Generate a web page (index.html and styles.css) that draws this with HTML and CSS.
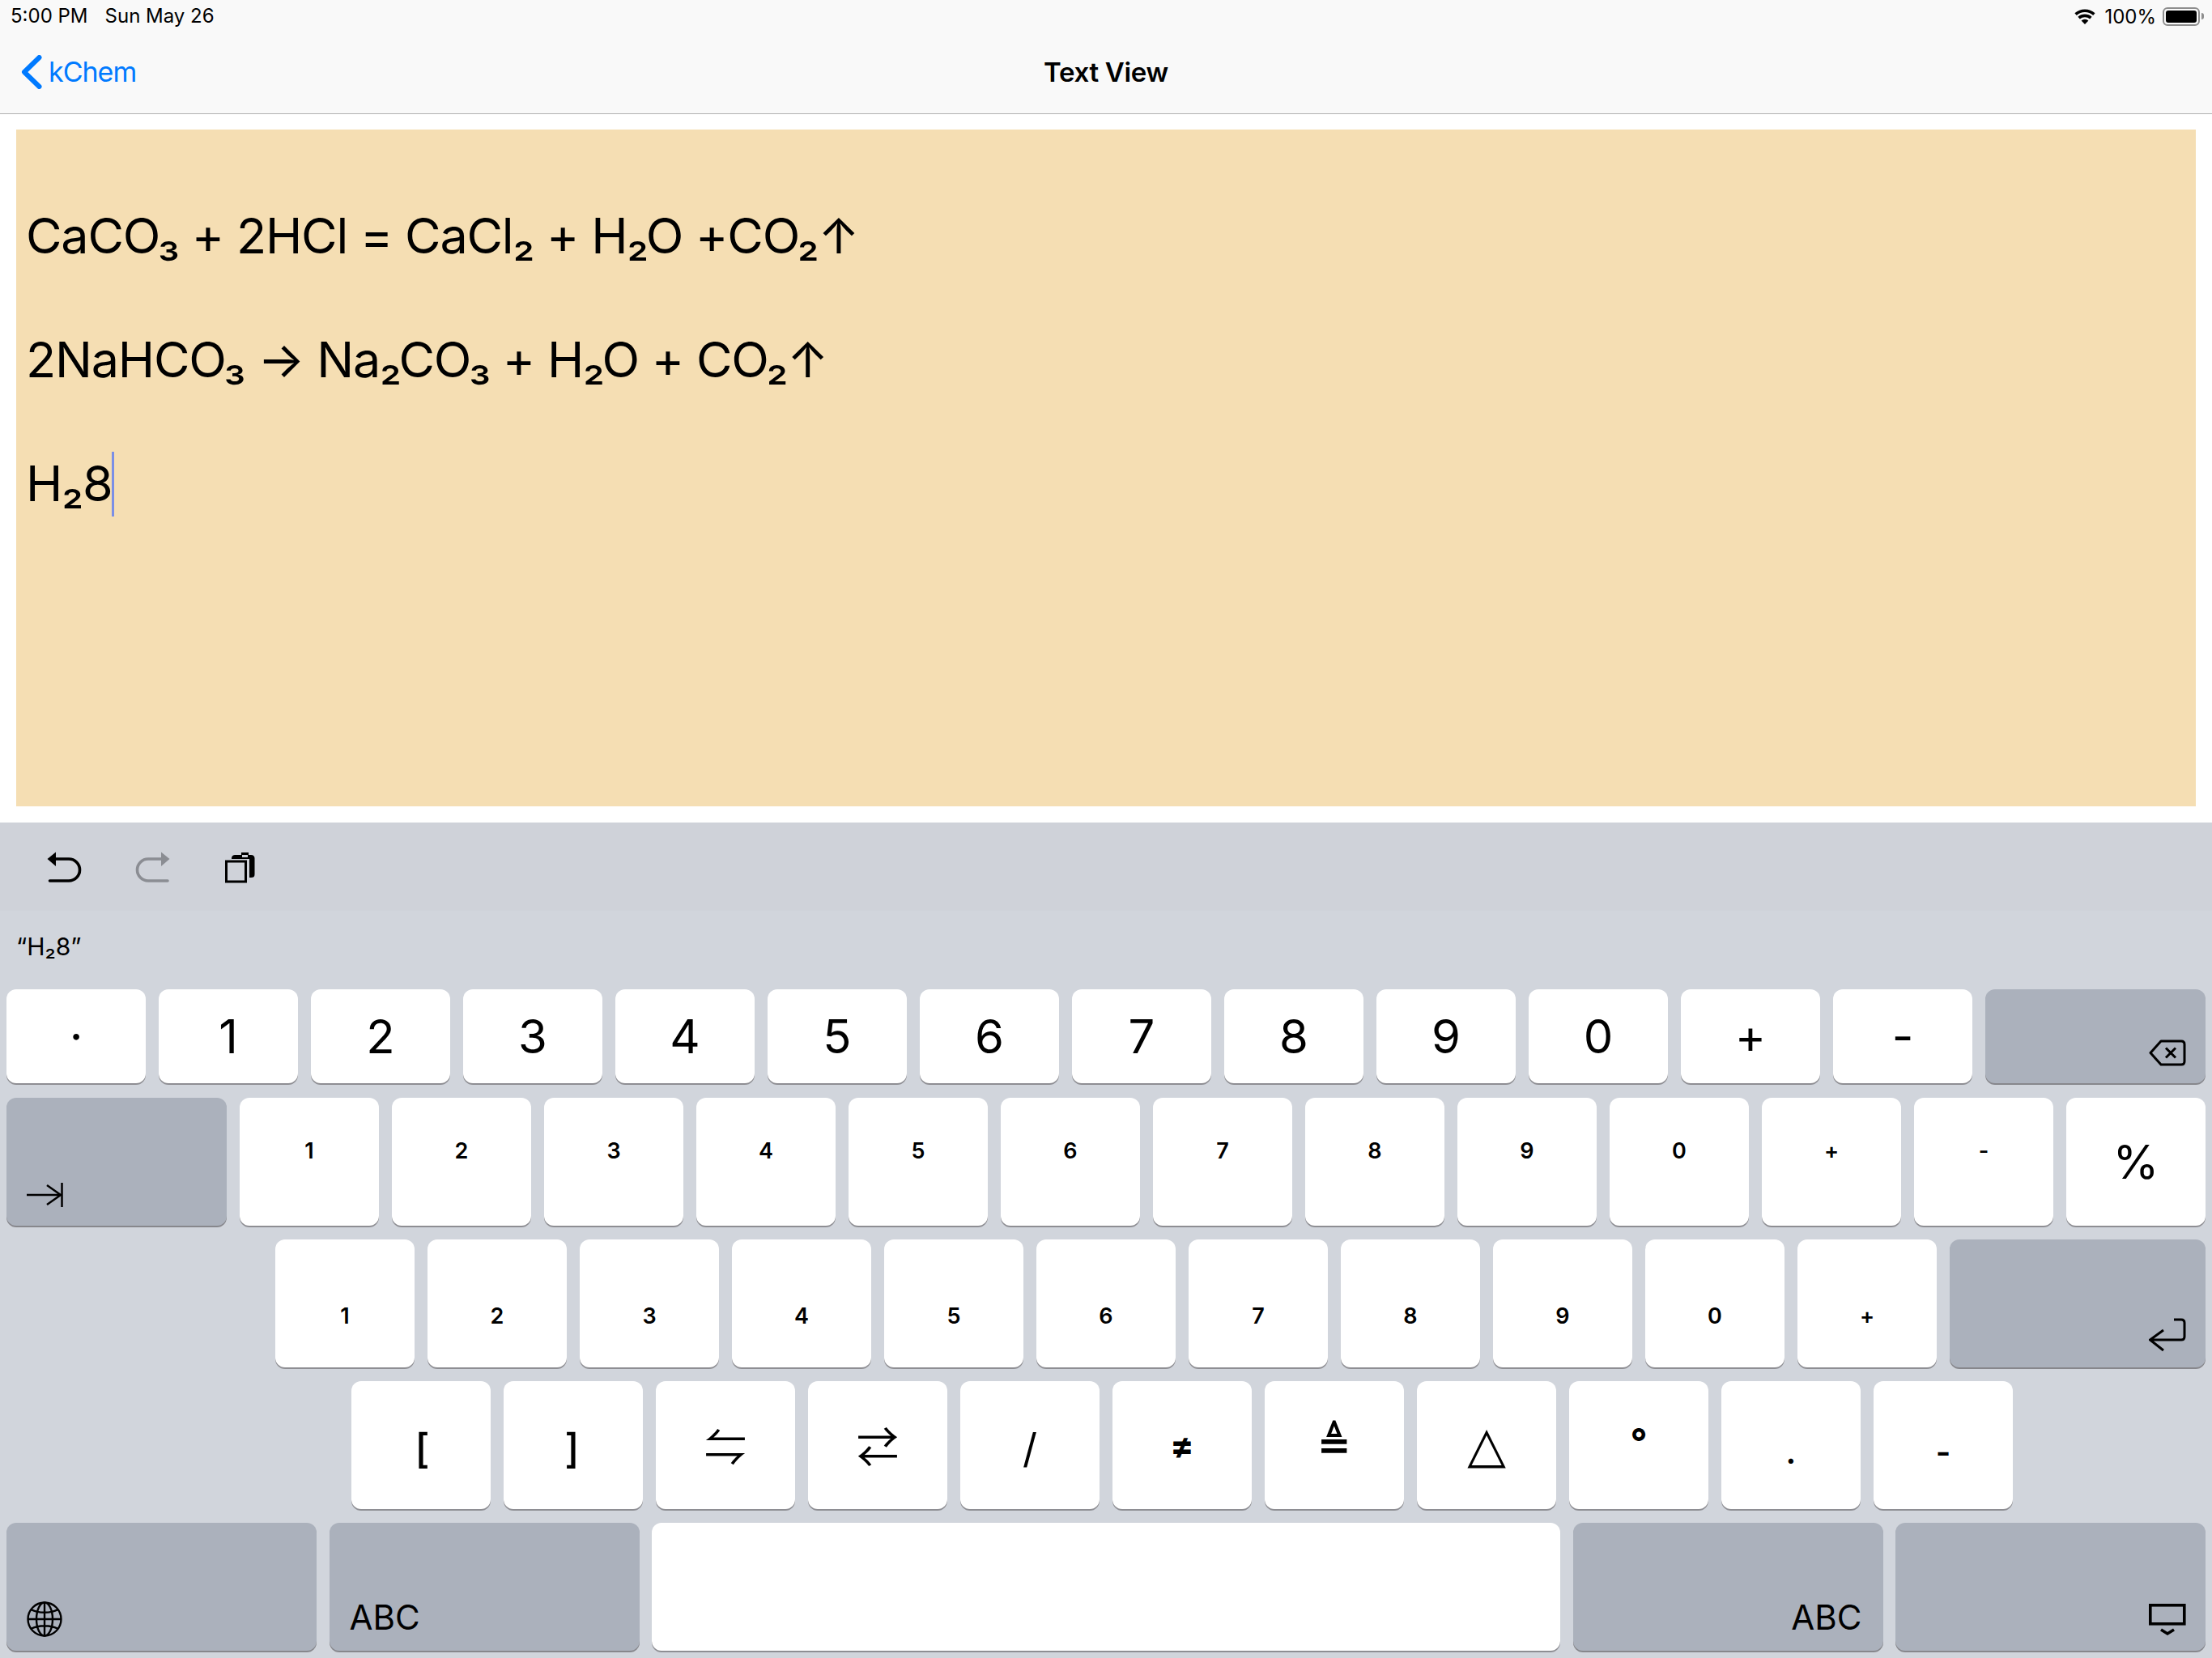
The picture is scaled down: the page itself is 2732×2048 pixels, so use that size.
FILE: index.html
```html
<!DOCTYPE html>
<html lang="en">
<head>
<meta charset="utf-8">
<title>Text View</title>
<link rel="stylesheet" href="styles.css">
</head>
<body>
<header class="top">
  <div class="status">
    <div class="status-left"><span>5:00 PM</span><span>Sun May 26</span></div>
    <div class="status-right">
      <svg class="wifi" viewBox="0 0 26 20"><path d="M13 20 L8.6 15.4 A6.6 6.6 0 0 1 17.4 15.4 Z"/><path d="M5.6 12.2 A11 11 0 0 1 20.4 12.2" class="wifi-arc"/><path d="M1.6 7.6 A17.2 17.2 0 0 1 24.4 7.6" class="wifi-arc"/></svg>
      <span>100%</span>
      <div class="battery"><div class="battery-fill"></div></div>
      <div class="battery-nub"></div>
    </div>
  </div>
  <nav class="nav">
    <a class="back">
      <svg class="chev" viewBox="0 0 26 42"><path d="M22.5 3 L4 21 L22.5 39"/></svg>
      <span>kChem</span>
    </a>
    <h1 class="title">Text View</h1>
  </nav>
</header>
<main class="content">
  <div class="editor">
    <p class="eq">CaCO₃ + 2HCl = CaCl₂ + H₂O +CO₂↑</p>
    <p class="eq">2NaHCO₃ → Na₂CO₃ + H₂O + CO₂↑</p>
    <p class="eq">H₂8<span class="caret"></span></p>
  </div>
</main>
<section class="keyboard">
  <div class="toolbar">
    <svg class="tool tool-undo" viewBox="0 0 44 40"><path class="solid" d="M0.5 9 L11 0.5 V18 Z"/><path class="line" d="M10 9 H27 A13.5 13.5 0 0 1 27 36 H3.5"/></svg>
    <svg class="tool tool-redo" viewBox="0 0 44 40"><path class="solid" d="M43.5 9 L33 0.5 V18 Z"/><path class="line" d="M34 9 H17 A13.5 13.5 0 0 0 17 36 H41"/></svg>
    <svg class="tool tool-paste" viewBox="0 0 38 40"><path class="solid" d="M8 9 C8 5 10 4 13 4 H20 V1 H29 V4 H32 C35 4 36.500 6 36.500 8 V28 C36.500 31 35 32 32 32 H30 V9 Z"/><rect class="clip" x="21" y="4" width="7" height="3"/><rect class="box" x="1.500" y="12" width="24" height="25"/></svg>
  </div>
  <div class="candidate">“H₂8”</div>
  <div class="keys">
    <div class="row row-1">
      <div class="key">·</div><div class="key">1</div><div class="key">2</div><div class="key">3</div><div class="key">4</div><div class="key">5</div><div class="key">6</div><div class="key">7</div><div class="key">8</div><div class="key">9</div><div class="key">0</div><div class="key">+</div><div class="key">-</div>
      <div class="key special w-delete corner-r">
        <svg class="icon-del" viewBox="0 0 46 33"><path d="M15 2 H40 C42.500 2 44 3.500 44 6 V27 C44 29.500 42.500 31 40 31 H15 L2 16.500 Z"/><path d="M21 10.500 L33 22.500 M33 10.500 L21 22.500"/></svg>
      </div>
    </div>
    <div class="row row-2">
      <div class="key special w-tab corner-l">
        <svg class="icon-tab" viewBox="0 0 46 32"><path d="M0 16 H42 M25 4 L42 16 L25 28"/><path d="M43.500 1 V31"/></svg>
      </div>
      <div class="key up">1</div><div class="key up">2</div><div class="key up">3</div><div class="key up">4</div><div class="key up">5</div><div class="key up">6</div><div class="key up">7</div><div class="key up">8</div><div class="key up">9</div><div class="key up">0</div><div class="key up">+</div><div class="key up">-</div><div class="key large">%</div>
    </div>
    <div class="row row-3">
      <div class="key down">1</div><div class="key down">2</div><div class="key down">3</div><div class="key down">4</div><div class="key down">5</div><div class="key down">6</div><div class="key down">7</div><div class="key down">8</div><div class="key down">9</div><div class="key down">0</div><div class="key down">+</div>
      <div class="key special w-return corner-r">
        <svg class="icon-ret" viewBox="0 0 46 42"><path d="M31 2 H40 Q44 2 44 6 V23 Q44 27 40 27 H2 M18 15 L1.500 27 L18 40"/></svg>
      </div>
    </div>
    <div class="row row-4">
      <div class="key sym bracket-l">[</div><div class="key sym bracket-r">]</div><div class="key sym arrows">⇋</div><div class="key sym arrows">⇄</div><div class="key sym">/</div><div class="key sym neq">≠</div><div class="key sym delta-eq">≜</div><div class="key sym tri">△</div><div class="key sym deg">°</div><div class="key sym low">.</div><div class="key sym low">-</div>
    </div>
    <div class="row row-5">
      <div class="key special w-wide corner-l">
        <svg class="icon-globe" viewBox="0 0 44 44"><circle cx="22" cy="22" r="20.500"/><ellipse cx="22" cy="22" rx="10" ry="20.500"/><path d="M22 1.500 V42.500 M1.500 22 H42.500 M5 10 C15 15 29 15 39 10 M5 34 C15 29 29 29 39 34"/></svg>
      </div>
      <div class="key special w-wide abc abc-l">ABC</div>
      <div class="key w-space"></div>
      <div class="key special w-wide abc abc-r">ABC</div>
      <div class="key special w-wide corner-r">
        <svg class="icon-kb" viewBox="0 0 46 40"><rect x="1.800" y="1.800" width="42" height="23"/><path d="M15 32 L23 37 L31 32"/></svg>
      </div>
    </div>
  </div>
</section>
</body>
</html>
```
FILE: styles.css
```css
* { box-sizing: border-box; }
html, body { margin: 0; padding: 0; }
body {
  width: 2732px;
  height: 2048px;
  background: #fff;
  display: flex;
  flex-direction: column;
  font-family: Inter, "Liberation Sans", sans-serif;
  color: #000;
  overflow: hidden;
}

.top {
  height: 141px;
  background: #f9f9f9;
  border-bottom: 1px solid #b0b0b0;
  flex: none;
}
.status {
  height: 38px;
  display: flex;
  justify-content: space-between;
  align-items: center;
  font-size: 24px;
  padding: 0 10px 0 13px;
}
.status-left { display: flex; gap: 21px; }
.status-right { display: flex; align-items: center; padding-top: 2px; }
.status-right span { margin: 0 8px 0 11px; }
.wifi { width: 26px; height: 20px; fill: #000; }
.wifi-arc { fill: none; stroke: #000; stroke-width: 3.6; }
.battery {
  width: 46px;
  height: 23px;
  border: 2px solid #8e8e8e;
  border-radius: 6px;
  padding: 2px;
}
.battery-fill { width: 100%; height: 100%; background: #000; border-radius: 3px; }
.battery-nub { width: 3px; height: 8px; margin-left: 2px; background: #8e8e8e; border-radius: 0 3px 3px 0; }

.nav {
  height: 102px;
  display: grid;
  grid-template-columns: 1fr auto 1fr;
  align-items: center;
  padding: 0 26px 1px;
}
.back {
  display: flex;
  align-items: center;
  gap: 8px;
  color: #007aff;
  font-size: 34px;
  letter-spacing: -1px;
  grid-column: 1;
}
.chev { width: 26px; height: 42px; fill: none; stroke: #007aff; stroke-width: 6; stroke-linecap: round; stroke-linejoin: round; }
.title { grid-column: 2; margin: 0; font-size: 33px; font-weight: 600; letter-spacing: -0.300px; }

.content { flex: none; height: 875px; padding: 19px 20px 20px; }
.editor {
  height: 836px;
  background: #f5deb3;
  padding: 55px 12px 0;
  font-size: 61px;
  letter-spacing: -1.200px;
}
.eq { margin: 0; line-height: 153px; white-space: nowrap; height: 153px; }
.caret {
  display: inline-block;
  width: 3px;
  height: 80px;
  background: #7b8fe6;
  vertical-align: -19px;
}

.keyboard {
  flex: none;
  height: 1032px;
  background: #d1d5dc;
  display: flex;
  flex-direction: column;
}
.toolbar {
  height: 109px;
  background: #cfd2d9;
  flex: none;
  display: flex;
  align-items: flex-start;
  padding: 36px 0 0 58px;
  gap: 64px;
}
.tool { width: 44px; height: 40px; flex: none; }
.tool .solid { fill: #000; }
.tool .line { fill: none; stroke: #000; stroke-width: 3.6; stroke-linecap: round; }
.tool-redo { fill: none; }
.tool-redo .solid { fill: #8b8d93; }
.tool-redo .line { stroke: #8b8d93; }
.tool-paste { width: 38px; margin-left: 4px; }
.tool-paste .clip { fill: #cfd2d9; }
.tool-paste .box { fill: #cfd2d9; stroke: #000; stroke-width: 3; }

.candidate {
  height: 97px;
  flex: none;
  padding: 26px 0 0 20px;
  font-size: 30px;
  line-height: 36px;
}

.keys { padding: 0 8px; display: flex; flex-direction: column; gap: 17.500px; }
.row { display: flex; gap: 16px; height: 157.500px; }
.row-1 { height: 116px; margin-bottom: 0.500px; }
.row-3 { padding-left: 332px; }
.row-4 { padding-left: 426px; }
.row-5 { gap: 15.500px; }

.key {
  width: 172px;
  flex: none;
  background: #fff;
  border-radius: 12px;
  box-shadow: 0 2px 0 #8e8e93;
  display: flex;
  align-items: center;
  justify-content: center;
  font-size: 58px;
  line-height: 1;
}
.up { font-size: 27px; font-weight: 600; padding-bottom: 27px; }
.down { font-size: 27px; font-weight: 600; padding-top: 31px; }
.large { font-size: 58px; }
.sym { font-size: 50px; padding-top: 8px; }
.bracket-l { padding-left: 3px; font-weight: 500; }
.bracket-r { padding-right: 3px; font-weight: 500; }
.arrows { font-size: 52px; font-family: "Noto Sans CJK JP", "DejaVu Sans", sans-serif; padding-top: 0; }
.neq { font-size: 44px; font-weight: 700; padding-top: 0; }
.delta-eq { font-size: 50px; font-family: "DejaVu Sans", sans-serif; font-weight: 700; padding-top: 0; }
.tri { font-size: 62px; font-family: "DejaVu Sans", sans-serif; padding-top: 0; }
.deg { font-size: 46px; font-weight: 700; padding-top: 0; padding-bottom: 8px; }
.low { padding-top: 18px; font-size: 40px; font-weight: 600; }

.special { background: #abb1bc; box-shadow: 0 2px 0 #87878c; }
.w-delete { width: 272px; }
.w-tab { width: 272px; }
.w-return { width: 316px; }
.w-wide { width: 383px; }
.w-space { width: 1122px; }
.corner-r { justify-content: flex-end; align-items: flex-end; padding: 0 24px 22px 0; }
.corner-l { justify-content: flex-start; align-items: flex-end; padding: 0 0 22px 25px; }
.abc { font-size: 42px; align-items: flex-end; padding-bottom: 20px; }
.abc-l { justify-content: flex-start; padding-left: 25px; }
.abc-r { justify-content: flex-end; padding-right: 26px; }

.icon-del, .icon-tab, .icon-ret, .icon-globe, .icon-kb { fill: none; stroke: #000; }
.icon-del { width: 46px; height: 33px; stroke-width: 3; stroke-linejoin: round; margin-bottom: -1px; }
.icon-tab { width: 46px; height: 32px; stroke-width: 2.500; }
.icon-ret { width: 46px; height: 42px; stroke-width: 3; margin-bottom: -3px; }
.icon-globe { width: 44px; height: 44px; stroke-width: 2.400; margin-bottom: -5px; }
.icon-kb { width: 46px; height: 40px; stroke-width: 3.600; margin-bottom: -4px; }
```
